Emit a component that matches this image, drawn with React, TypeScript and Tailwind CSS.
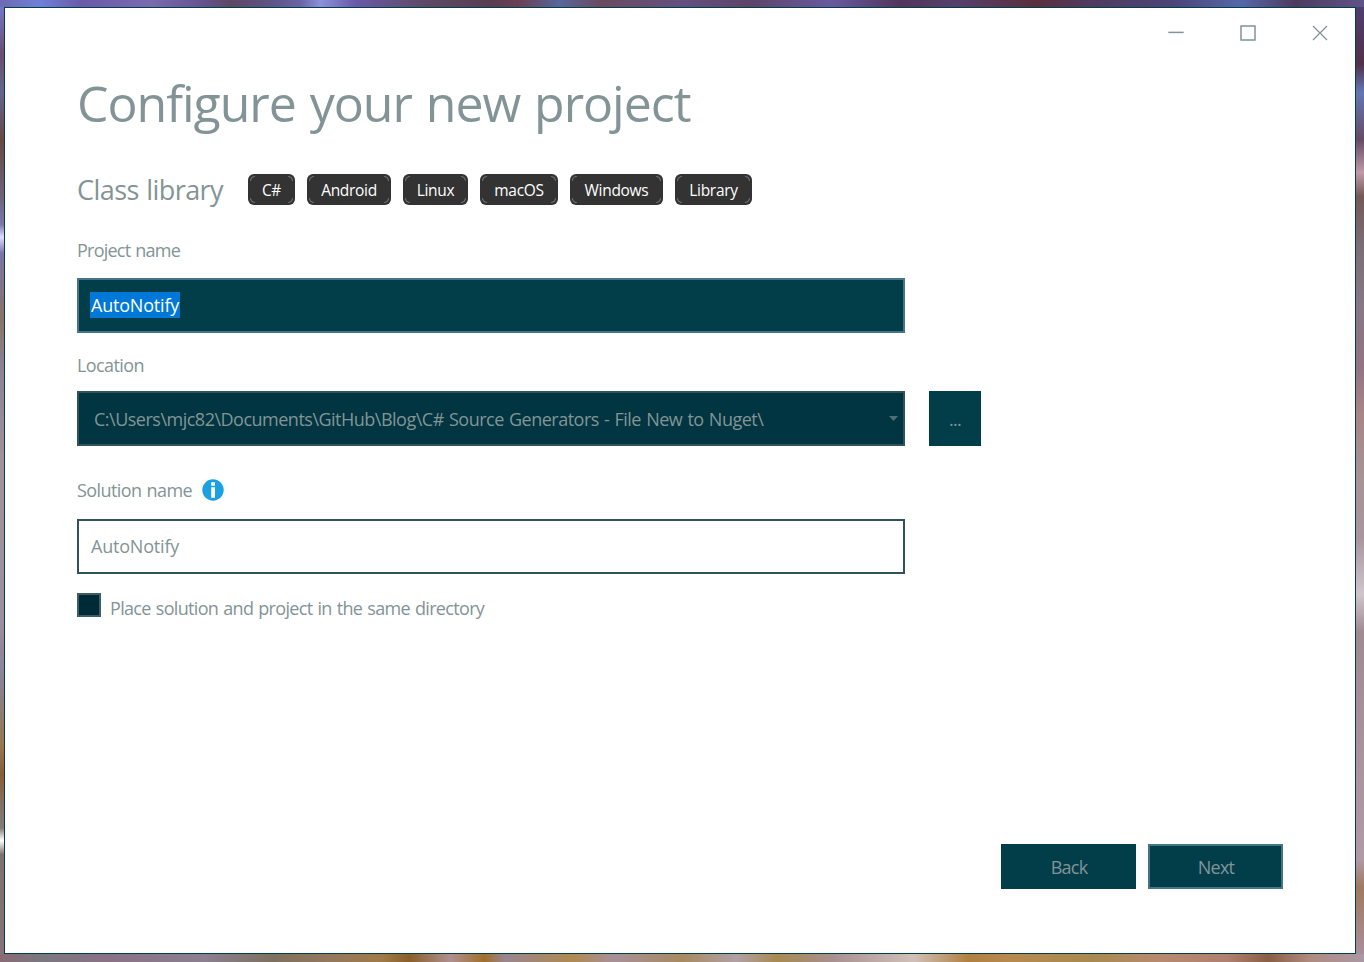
import React from "react";

const tags = [
  { name: "C#", box: "w-[47px]" },
  { name: "Android", box: "w-[84px]" },
  { name: "Linux", box: "w-[65px]" },
  { name: "macOS", box: "w-[78px]" },
  { name: "Windows", box: "w-[93px]" },
  { name: "Library", box: "w-[77px]" },
];

const corners = [
  "left-[2px] top-[2px]",
  "right-[2px] top-[2px] rotate-90",
  "bottom-[2px] right-[2px] rotate-180",
  "bottom-[2px] left-[2px] -rotate-90",
];

function Tag({ name, box }: { name: string; box: string }) {
  return (
    <span className={`relative flex h-[31px] ${box} items-center justify-center rounded-[6px] bg-[#333333] pt-[3px]`}>
      {corners.map((c) => (
        <svg key={c} className={`absolute ${c}`} width="5" height="5" fill="none" stroke="#858585" strokeWidth="0.9" aria-hidden="true">
          <path d="M0.4 4.8Q0.6 0.6 4.8 0.4" />
        </svg>
      ))}
      <span className="whitespace-nowrap text-[15.5px] tracking-[-0.3px] text-white">{name}</span>
    </span>
  );
}

export default function App() {
  return (
    <div className="flex h-[962px] w-[1364px] flex-col overflow-hidden bg-[#80727e] font-['Open_Sans',sans-serif] text-[#839496]">
      <div className="h-[7px] shrink-0 bg-[linear-gradient(90deg,#6d6ab0,#6f80d8_3%,#6a5aa8_6%,#7a6bb0_11%,#64528c_15%,#5d4763_17%,#5f5488_20%,#6a62a5_22%,#8a92dc_23.5%,#6a5aa8_26%,#5d4a68_31%,#5a3c50_36%,#6a3f55_38%,#56679a_41%,#6a4a60_44%,#645080_50%,#5d4468_55%,#685aa0_61%,#51345a_66%,#55406c_70%,#5b2f3c_76%,#4f3a60_80%,#4c4478_86%,#5468a8_91%,#4d3a60_95%,#5f5488)]" />
      <div className="flex h-[947px] shrink-0">
        <div className="w-1 shrink-0 bg-[linear-gradient(180deg,#7676c5,#6c4c70_5%,#64658d_9%,#684743_14%,#6f6279_20%,#7e78ab_23%,#e0dcff_24.3%,#7b75a6_26%,#8a7268_33%,#8c8194_38%,#a3919a_48%,#9b8f9f_65%,#8b8297_71%,#99754f_78%,#8a5c35_81%,#85736d_85%,#857a78_86.7%,#ffffff_88%,#7d7074_89.5%,#86727a)]" />
        <main className="flex w-[1352px] flex-col border border-[#033f4a] bg-white">
          <header className="flex h-[50px] justify-end">
            <svg width="216" height="50" viewBox="0 0 216 50" fill="none" stroke="#839496">
              <path d="M29.3 24.4h15.4" strokeWidth="1.5" />
              <rect x="102" y="18" width="14" height="14" strokeWidth="1.5" />
              <path d="M174 18l14 14M188 18l-14 14" strokeWidth="1.3" />
            </svg>
          </header>
          <div className="flex flex-col items-start pl-[72px]">
            <h1 className="mt-[9px] h-[72px] whitespace-nowrap text-[50px] leading-[72px] tracking-[-1.03px] [word-spacing:2px]">Configure your new project</h1>
            <div className="mt-[26px] flex h-[48px] items-center gap-3">
              <h2 className="w-[159px] whitespace-nowrap pt-[2px] text-[27px] tracking-[-0.56px] [word-spacing:1px]">Class library</h2>
              {tags.map((t) => <Tag key={t.name} {...t} />)}
            </div>
            <label className="mt-[24px] h-[26px] text-[18px] leading-[26px] tracking-[-0.76px] [word-spacing:1px]">Project name</label>
            <div className="mt-[15px] flex h-[55px] w-[828px] items-start border-2 border-[#457587] bg-[#023d4a] pl-[11px] pt-3">
              <span className="h-[26px] w-[90px] bg-[#0078d7] pl-px text-[18px] leading-[27px] tracking-[-0.2px] text-white">AutoNotify</span>
            </div>
            <label className="mt-[19px] h-[26px] text-[18px] leading-[26px] tracking-[-0.6px]">Location</label>
            <div className="mt-[13px] flex gap-6">
              <div className="flex h-[55px] w-[828px] items-center justify-between border-2 border-[#2e5459] bg-[#003541] pl-[15px] pr-[5px]">
                <span className="whitespace-nowrap pt-[2px] text-[18px] tracking-[-0.5px] [word-spacing:1px]">C:\Users\mjc82\Documents\GitHub\Blog\C# Source Generators - File New to Nuget\</span>
                <svg width="9" height="5"><path d="M0 0h9L4.5 5z" fill="#4d7077" /></svg>
              </div>
              <button className="flex h-[55px] w-[52px] items-center justify-center bg-[#023d4a] pt-[2px] text-[18px] tracking-[-0.7px]">...</button>
            </div>
            <div className="mt-[31px] flex h-[26px] items-center">
              <label className="w-[125px] whitespace-nowrap text-[18px] tracking-[-0.58px] [word-spacing:1px]">Solution name</label>
              <svg width="22" height="22" viewBox="0 0 22 22">
                <circle cx="11" cy="11" r="10.7" fill="#1ba1e2" />
                <path d="M9.2 3.2h3.8v3.5H9.2zM9.2 8.2h3.8v10.5H9.2z" fill="#fff" />
              </svg>
            </div>
            <div className="mt-4 flex h-[55px] w-[828px] items-center border-2 border-[#2e5459] pl-3 text-[18px] tracking-[-0.2px]">AutoNotify</div>
            <div className="mt-[19px] flex gap-[9px]">
              <span className="h-6 w-6 border-2 border-[#3c5e66] bg-[#002b36]" />
              <span className="mt-[2px] whitespace-nowrap text-[18px] leading-[26px] tracking-[-0.67px] [word-spacing:1px]">Place solution and project in the same directory</span>
            </div>
          </div>
          <footer className="mb-16 mr-[72px] mt-auto flex justify-end gap-3 text-[18px] tracking-[-0.75px]">
            <button className="h-[45px] w-[135px] bg-[#023d4a] pl-px pt-[2px]">Back</button>
            <button className="h-[45px] w-[135px] border-2 border-[#457587] bg-[#023d4a] pl-px pt-[2px]">Next</button>
          </footer>
        </main>
        <div className="w-2 shrink-0 bg-[linear-gradient(180deg,#4f3d70,#51304a_6%,#6377b5_9%,#664b65_14%,#c09aa8_17.5%,#745957_20%,#7a6d76_25%,#857884_31%,#937484_38%,#a88587_43%,#a69496_50%,#a8959e_56%,#cfc5cb_62%,#a08a92_66%,#b09aa5_90%,#a07a60_93%,#aa8d9b)]" />
      </div>
      <div className="h-2 shrink-0 bg-[linear-gradient(90deg,#8a6a75,#7a7880_3%,#8a7285_8%,#8a8090_15%,#7d7060_20%,#94785f_24%,#a07a48_28%,#8a5f2a_30%,#b09090_33%,#a0702a_35.5%,#9a8590_37%,#b08a50_42%,#a8909a_45%,#a88a60_50%,#b0a0a5_54%,#a88a50_57%,#a89090_61%,#d0c0b8_67%,#b08040_71%,#b88a50_74%,#a88a50_80%,#b88a70_85%,#b08070_90%,#8a5f45_93%,#b08a80_96%,#aa98a5)]" />
    </div>
  );
}
